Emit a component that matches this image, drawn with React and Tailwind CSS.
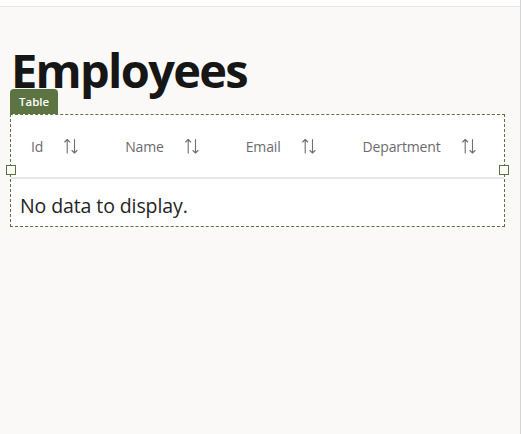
import React from "react";

function SortIcon() {
  return (
    <svg width="14" height="16" viewBox="0 0 14 16" fill="none" stroke="#6e6e6e" strokeWidth="1.1" strokeLinecap="round" strokeLinejoin="round">
      <path d="M3.2 15V1.5M0.7 4L3.2 1.5L5.7 4" />
      <path d="M10.5 1.5V15M8 12.5L10.5 15L13 12.5" />
    </svg>
  );
}

const cols = ["Id", "Name", "Email", "Department"];

export default function App() {
  return (
    <div className="w-[521px] h-[434px] bg-[#faf9f8] border-r border-[#d4d4d4] overflow-hidden font-['Open_Sans',sans-serif]">
      <div className="h-[7px] bg-white border-b border-[#e6e4e2]" />
      <div className="px-[10px] pt-[44px]">
        <h1 className="text-[47px] leading-[38px] h-[38px] font-bold text-[#161616] tracking-[-1.7px] pl-[1px]">
          Employees
        </h1>
        <div className="flex">
          <div className="h-[25px] px-[9px] bg-[#5b7442] rounded-t-[4px] text-white text-[11.5px] font-semibold leading-[25px]">
            Table
          </div>
        </div>
        <div className="relative w-[495px] h-[113px] bg-white border border-dashed border-[#5b7442]">
          <div className="h-[64px] flex items-center pl-[20px] gap-[47px] border-b-2 border-[#e6e6e6]">
            {cols.map((c) => (
              <div key={c} className="flex items-center gap-[21px]">
                <span className="text-[14px] text-[#6b6b6b] tracking-[-0.15px]">{c}</span>
                <SortIcon />
              </div>
            ))}
          </div>
          <div className="h-[45px] flex items-center pl-[9px] pt-[8px]">
            <span className="text-[19.5px] text-[#242424] tracking-[-0.1px]">No data to display.</span>
          </div>
          <div className="absolute left-[-5px] top-[50px] w-[10px] h-[10px] bg-white border border-[#5b7442]" />
          <div className="absolute right-[-5px] top-[50px] w-[10px] h-[10px] bg-white border border-[#5b7442]" />
        </div>
      </div>
    </div>
  );
}
